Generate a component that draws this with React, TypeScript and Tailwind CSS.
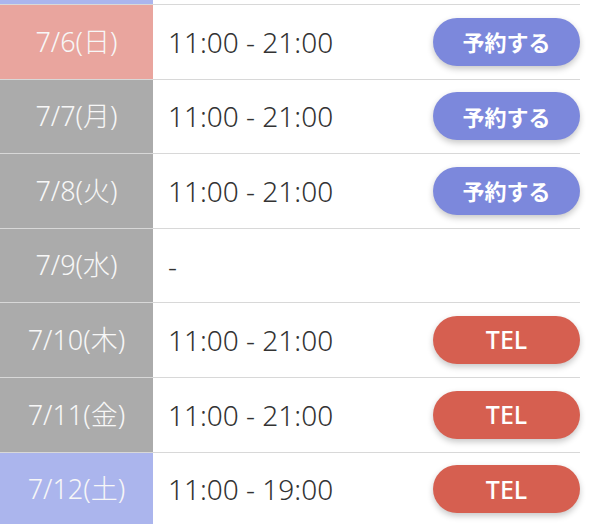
const rows = [
  { date: '7/6(日)', time: '11:00 - 21:00', kind: 'sun', action: 'reserve' },
  { date: '7/7(月)', time: '11:00 - 21:00', kind: 'day', action: 'reserve' },
  { date: '7/8(火)', time: '11:00 - 21:00', kind: 'day', action: 'reserve' },
  { date: '7/9(水)', time: '-', kind: 'day', action: null },
  { date: '7/10(木)', time: '11:00 - 21:00', kind: 'day', action: 'tel' },
  { date: '7/11(金)', time: '11:00 - 21:00', kind: 'day', action: 'tel' },
  { date: '7/12(土)', time: '11:00 - 19:00', kind: 'sat', action: 'tel' },
]

const dateBg: Record<string, string> = {
  sun: 'bg-[#e9a59e]',
  sat: 'bg-[#abb5ed]',
  day: 'bg-[#ababab]',
}

export default function App() {
  return (
    <div className="w-[600px] h-[524px] overflow-hidden bg-white font-['Noto_Sans','Noto_Sans_CJK_JP',sans-serif]">
      <div className="w-[580px]">
        <div className="flex h-[4px]">
          <div className="w-[153px] bg-[#abb5ed]" />
          <div className="flex-1" />
        </div>
        {rows.map((r) => (
          <div key={r.date} className="flex h-[74.6px] border-t border-[#d8d8d8]">
            <div className={`w-[153px] flex items-center justify-center text-[27px] font-light text-[#f7f7f7] ${dateBg[r.kind]}`}>
              {r.date}
            </div>
            <div className="flex flex-1 items-center justify-between pl-[15px]">
              <span className="text-[28px] font-light text-[#333333]">{r.time}</span>
              {r.action === 'reserve' && (
                <button className="w-[147px] h-[48px] rounded-full bg-[#7c88dc] text-white text-[22px] font-bold shadow-[0_3px_6px_rgba(0,0,0,0.22)] font-['Noto_Sans_CJK_JP',sans-serif]">
                  予約する
                </button>
              )}
              {r.action === 'tel' && (
                <button className="w-[147px] h-[48px] rounded-full bg-[#d65f50] text-white text-[25px] font-medium shadow-[0_3px_6px_rgba(0,0,0,0.22)]">
                  TEL
                </button>
              )}
            </div>
          </div>
        ))}
      </div>
    </div>
  )
}
